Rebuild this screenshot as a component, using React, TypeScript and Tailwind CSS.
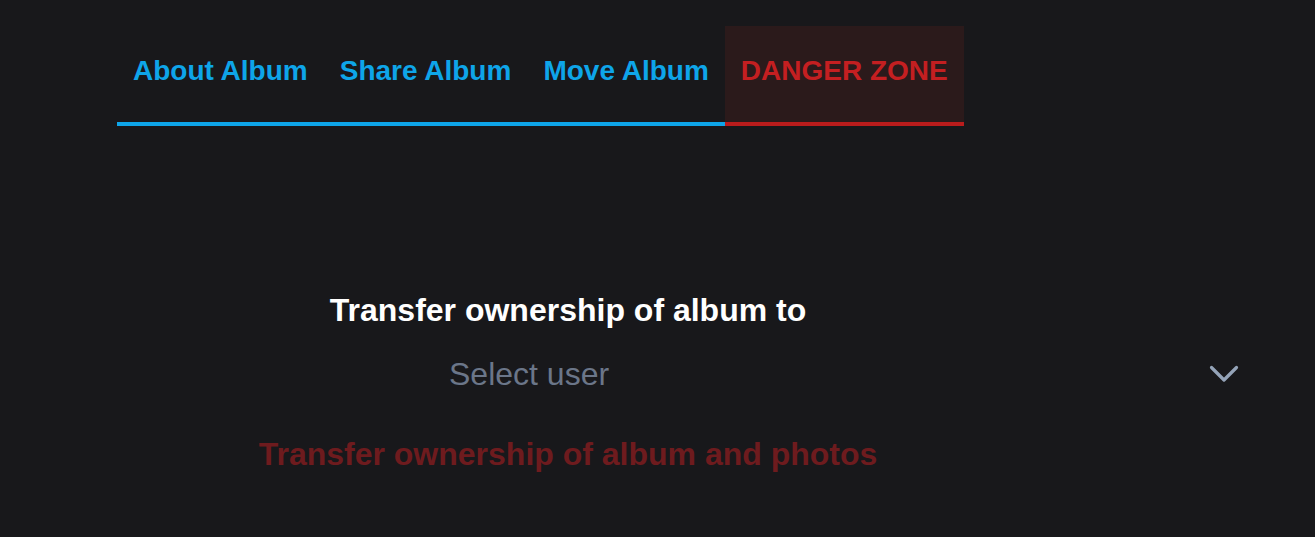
import { useState } from 'react';

const tabs = ['About Album', 'Share Album', 'Move Album'];

function Chevron() {
    return (
        <svg width="30" height="18" viewBox="0 0 30 18" fill="none" className="text-[#94a3b8]">
            <polyline points="2.5,2.5 15,15 27.5,2.5" stroke="currentColor" strokeWidth="3.2" strokeLinecap="round" strokeLinejoin="round" />
        </svg>
    );
}

export default function App() {
    const [user, setUser] = useState('');

    return (
        <div className="min-h-[537px] bg-[#18181b] font-['Liberation_Sans',Arial,sans-serif]">
            <div className="pl-[117px] pt-[26px] flex">
                {tabs.map((t) => (
                    <div
                        key={t}
                        className="px-4 pt-[29px] pb-[36px] border-b-4 border-[#0ea5e9] text-[28px] leading-[31px] font-bold text-[#0ea5e9]"
                    >
                        {t}
                    </div>
                ))}
                <div className="px-4 pt-[29px] pb-[36px] border-b-4 border-[#b91c1c] bg-[#2b1a1b] text-[28px] leading-[31px] font-bold text-[#c41f21]">
                    DANGER ZONE
                </div>
            </div>

            <div className="mt-[166px] flex flex-col">
                <div className="w-[902px] ml-[117px] text-center text-[32px] leading-[36px] font-bold text-white">
                    Transfer ownership of album to
                </div>
                <div className="mt-[28px] ml-[433px] w-[821px] h-[36px] flex items-center justify-between pl-4 pr-4">
                    <span className="text-[32px] leading-[36px] text-[#6b7689]">{user || 'Select user'}</span>
                    <button onClick={() => setUser('')} className="mr-[-1px]">
                        <Chevron />
                    </button>
                </div>
                <div className="mt-[44px] w-[902px] ml-[117px] text-center">
                    <button className="text-[32px] leading-[36px] font-bold text-[#6e1b1e]">
                        Transfer ownership of album and photos
                    </button>
                </div>
            </div>
        </div>
    );
}
